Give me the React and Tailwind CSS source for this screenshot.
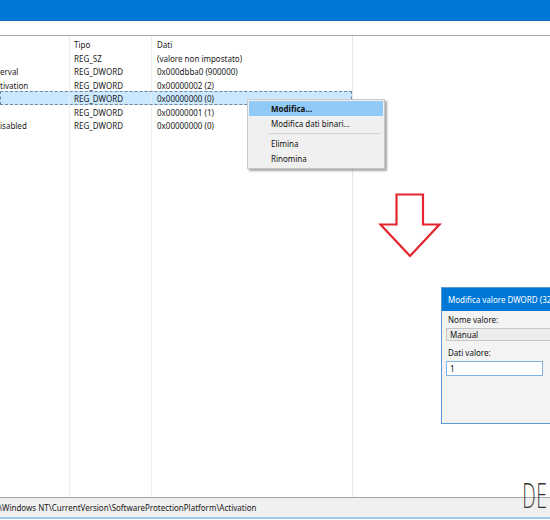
const rows = [
  { name: "", type: "REG_SZ", data: "(valore non impostato)" },
  { name: "erval", type: "REG_DWORD", data: "0x000dbba0 (900000)" },
  { name: "tivation", type: "REG_DWORD", data: "0x00000002 (2)" },
  { name: "", type: "REG_DWORD", data: "0x00000000 (0)", selected: true },
  { name: "", type: "REG_DWORD", data: "0x00000001 (1)" },
  { name: "isabled", type: "REG_DWORD", data: "0x00000000 (0)" },
];

const cols = "grid grid-cols-[70px_82px_200px]";

function ContextMenu() {
  return (
    <div className="absolute left-[247px] top-[99px] w-[138px] h-[70px] bg-[#f0f0f0] border border-[#c8c8c8] shadow-[2px_2px_2px_rgba(0,0,0,0.35)] p-[1px] text-[8px] text-[#111]">
      <div className="h-[15px] bg-[#91c9f7] flex items-center pl-[22px] font-bold">Modifica...</div>
      <div className="h-[15px] flex items-center pl-[22px]">Modifica dati binari...</div>
      <div className="h-[5px] flex items-center pl-[20px] pr-[2px]">
        <div className="h-px w-full bg-[#d4d4d4]" />
      </div>
      <div className="h-[15px] flex items-center pl-[22px]">Elimina</div>
      <div className="h-[15px] flex items-center pl-[22px]">Rinomina</div>
    </div>
  );
}

function DwordDialog() {
  return (
    <div className="absolute left-[441px] top-[287px] w-[130px] h-[137px] border border-[#5a9ad8] bg-[#f3f3f3] flex flex-col text-[8px] text-[#111]">
      <div className="h-[23px] bg-[#0078d7] text-white text-[8px] flex items-center pl-[6px] shrink-0 whitespace-nowrap overflow-hidden">
        Modifica valore DWORD (32-bit)
      </div>
      <div className="flex flex-col pl-[4px] pt-[3px]">
        <div className="h-[12px] flex items-center pl-[2px]">Nome valore:</div>
        <div className="h-[13px] mt-[2px] bg-[#ececec] border border-[#c6c6c6] flex items-center pl-[3px]">Manual</div>
        <div className="h-[12px] mt-[6px] flex items-center pl-[2px]">Dati valore:</div>
        <div className="h-[15px] mt-[2px] w-[97px] bg-white border border-[#7eb4ea] flex items-center pl-[3px]">1</div>
      </div>
    </div>
  );
}

function DownArrow() {
  return (
    <svg className="absolute left-[378px] top-[192px]" width="64" height="68" viewBox="0 0 64 68">
      <polygon
        points="18.5,2.5 45,2.5 45,32.5 61.5,32.5 32,64 2.5,32.5 18.5,32.5"
        fill="white"
        stroke="#e3262e"
        strokeWidth="2.2"
        strokeLinejoin="miter"
      />
    </svg>
  );
}

export default function App() {
  return (
    <div
      className="relative w-[550px] h-[520px] overflow-hidden bg-white flex flex-col"
      style={{ fontFamily: "'Noto Sans', 'Liberation Sans', sans-serif" }}
    >
      <div className="h-[21px] bg-[#0078d7] border-b border-[#1769bd] shrink-0" />
      <div className="h-[15px] bg-white border-b border-[#a6a6a6] shrink-0" />

      <div className="h-[461px] flex shrink-0">
        <div className="w-[353px] flex flex-col border-r border-[#e6e6e6] text-[8px] text-[#1a1a1a]">
          <div className={`${cols} h-[15px]`}>
            <div className="border-r border-[#ececec]" />
            <div className="border-r border-[#ececec] pl-[4px] pt-[2px] flex items-center">Tipo</div>
            <div className="pl-[5px] pt-[2px] flex items-center">Dati</div>
          </div>
          {rows.map((r, i) => (
            <div
              key={i}
              className={`${cols} h-[13.4px] ${
                r.selected ? "bg-[#cce8ff] outline outline-1 outline-dashed outline-[#6d87a3] -outline-offset-1" : ""
              }`}
            >
              <div className="border-r border-[#ececec] pt-[2px] flex items-center whitespace-nowrap overflow-hidden">{r.name}</div>
              <div className="border-r border-[#ececec] pl-[4px] pt-[2px] flex items-center whitespace-nowrap">{r.type}</div>
              <div className="pl-[5px] pt-[2px] flex items-center whitespace-nowrap">{r.data}</div>
            </div>
          ))}
          <div className={`${cols} flex-1`}>
            <div className="border-r border-[#ececec]" />
            <div className="border-r border-[#ececec]" />
            <div />
          </div>
        </div>
        <div className="flex-1 bg-white" />
      </div>

      <div className="h-[22px] border-t border-[#a6a6a6] border-b-2 border-b-[#9fc9e8] bg-[#f0f0f0] flex items-center text-[8px] text-[#1a1a1a] whitespace-nowrap -ml-[1px] shrink-0">
        \Windows NT\CurrentVersion\SoftwareProtectionPlatform\Activation
      </div>

      <ContextMenu />
      <DownArrow />
      <DwordDialog />

      <div
        className="absolute left-[522px] top-[480px] text-[33px] leading-none text-[#333] font-extralight origin-left scale-x-[0.55] whitespace-nowrap"
        style={{ fontFamily: "'DejaVu Sans', sans-serif" }}
      >
        DE
      </div>
    </div>
  );
}
